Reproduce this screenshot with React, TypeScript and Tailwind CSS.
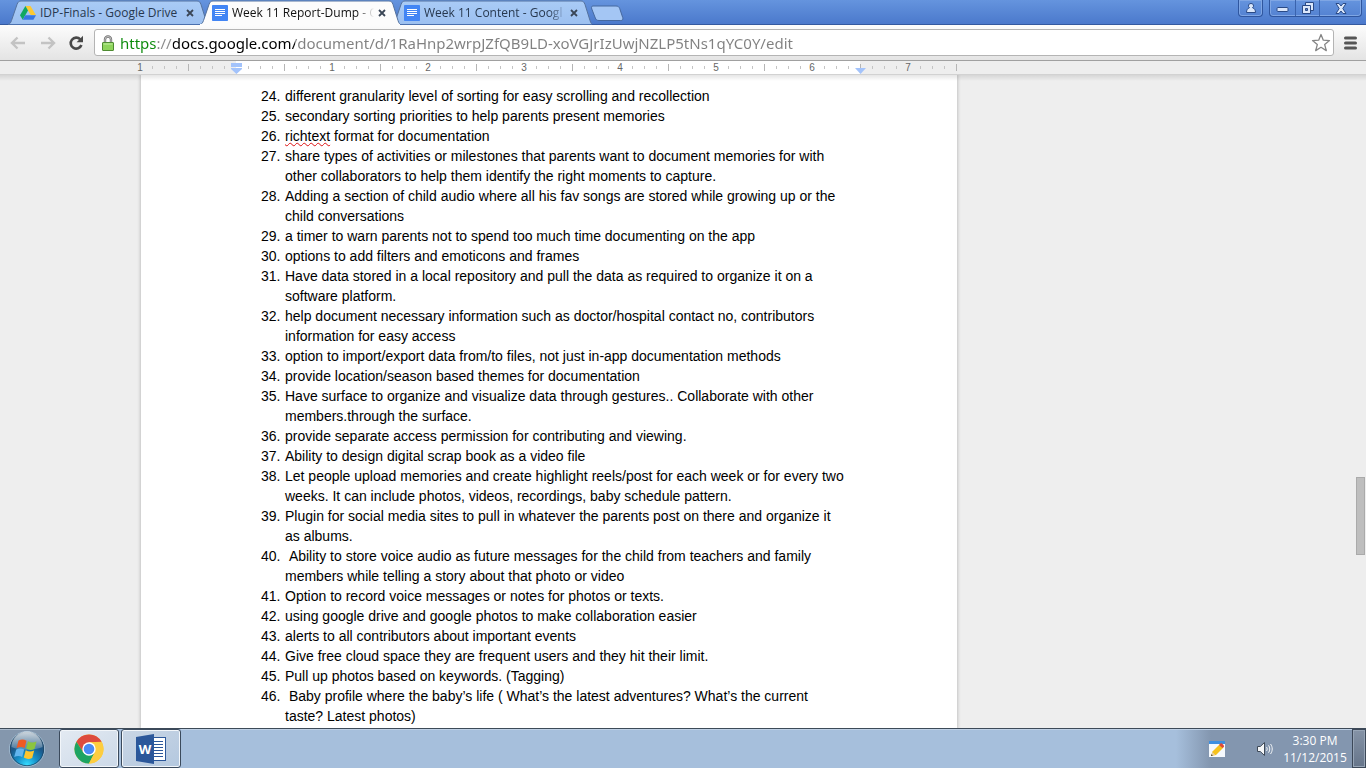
import { useState } from "react";

const items: string[] = [
  "different granularity level of sorting for easy scrolling and recollection",
  "secondary sorting priorities to help parents present memories",
  "richtext format for documentation",
  "share types of activities or milestones that parents want to document memories for with\nother collaborators to help them identify the right moments to capture.",
  "Adding a section of child audio where all his fav songs are stored while growing up or the\nchild conversations",
  "a timer to warn parents not to spend too much time documenting on the app",
  "options to add filters and emoticons and frames",
  "Have data stored in a local repository and pull the data as required to organize it on a\nsoftware platform.",
  "help document necessary information such as doctor/hospital contact no, contributors\ninformation for easy access",
  "option to import/export data from/to files, not just in-app documentation methods",
  "provide location/season based themes for documentation",
  "Have surface to organize and visualize data through gestures.. Collaborate with other\nmembers.through the surface.",
  "provide separate access permission for contributing and viewing.",
  "Ability to design digital scrap book as a video file",
  "Let people upload memories and create highlight reels/post for each week or for every two\nweeks. It can include photos, videos, recordings, baby schedule pattern.",
  "Plugin for social media sites to pull in whatever the parents post on there and organize it\nas albums.",
  "\u00a0Ability to store voice audio as future messages for the child from teachers and family\nmembers while telling a story about that photo or video",
  "Option to record voice messages or notes for photos or texts.",
  "using google drive and google photos to make collaboration easier",
  "alerts to all contributors about important events",
  "Give free cloud space they are frequent users and they hit their limit.",
  "Pull up photos based on keywords. (Tagging)",
  "\u00a0Baby profile where the baby’s life ( What’s the latest adventures? What’s the current\ntaste? Latest photos)",
];

function DriveIcon() {
  return (
    <svg viewBox="0 0 16 16" className="size-4 shrink-0" aria-hidden="true">
      <path d="M5.4 1h5.1l5.4 9h-5.2z" fill="#fcc934" />
      <path d="M5.4 1 0 10.2 2.7 14.7 8 5.5z" fill="#11a861" />
      <path d="M5.3 10.2H16l-2.6 4.5H2.7z" fill="#3777e3" />
    </svg>
  );
}

function DocsIcon() {
  return (
    <svg viewBox="0 0 16 16" className="size-4 shrink-0" aria-hidden="true">
      <rect width="16" height="16" rx="0.8" fill="#4285f4" />
      <path d="M3 4.5h10M3 6.5h10M3 8.5h10M3 10.5h7" stroke="#fff" />
    </svg>
  );
}

type TabProps = { title: string; active?: boolean; drive?: boolean };

function Tab({ title, active, drive }: TabProps) {
  return (
    <div className={`relative -mr-2 h-[25px] w-[200px] shrink-0 ${active ? "z-10" : ""}`}>
      <svg
        viewBox="0 0 200 25"
        preserveAspectRatio="none"
        className="absolute inset-0 size-full"
        aria-hidden="true"
      >
        <defs>
          <linearGradient id="idleTab" x1="0" y1="0" x2="0" y2="1">
            <stop offset="0" stopColor="#a9cbf6" />
            <stop offset="1" stopColor="#9cc0f0" />
          </linearGradient>
        </defs>
        <path
          d="M0 24.5C2 24 2.5 23 3.5 20.5L9 4.5C10 1.8 11 1 13 1H189C191 1 192 1.8 193 4.5L198 20.5C199 23.5 199.500 24 201 24.500"
          fill={active ? "#fcfcfc" : "url(#idleTab)"}
          stroke="#54729f"
        />
        <path d={active ? "M0 24.5H200" : "M1 24.5H200"} stroke={active ? "#fcfcfc" : "#4a70ae"} />
      </svg>
      <div className="relative flex h-[25px] items-center px-3">
        {drive ? <DriveIcon /> : <DocsIcon />}
        <a
          href="#document"
          className={`ml-1 min-w-0 flex-1 overflow-hidden whitespace-nowrap text-[12px] leading-4 ${
            active ? "text-[#111]" : "text-[#27384f]"
          } ${drive ? "" : "[mask-image:linear-gradient(to_right,#000_125px,transparent_142px)]"}`}
        >
          {title}
        </a>
        <button type="button" aria-label="Close tab" className="flex size-3 shrink-0 items-center justify-center">
          <svg viewBox="0 0 8 8" className="size-2">
            <path d="M1 1l6 6M7 1 1 7" stroke="#3a4656" strokeWidth="1.8" />
          </svg>
        </button>
      </div>
    </div>
  );
}

function WindowControls() {
  const stroke = "#2a4a86";
  return (
    <div className="ml-auto flex h-[17px] pr-1">
      <button
        type="button"
        aria-label="Profile"
        className="mr-1.5 flex w-[25px] items-center justify-center rounded-b border border-t-0 border-[#2f569f] shadow-[inset_0_0_0_1px_#7fa6e4]"
      >
        <svg viewBox="0 0 12 12" className="size-3">
          <path
            d="M6 1.500a2.300 2.300 0 0 1 1.500 4.200C9.500 6.500 10.500 8 10.500 10.500h-9C1.500 8 2.500 6.500 4.500 5.700A2.300 2.300 0 0 1 6 1.500z"
            fill="#dbe7fa"
            stroke={stroke}
          />
        </svg>
      </button>
      <div className="flex overflow-hidden rounded-b border border-t-0 border-[#2f569f] shadow-[inset_0_0_0_1px_#7fa6e4]">
        <button type="button" aria-label="Minimize" className="flex w-[25px] items-center justify-center pt-1">
          <svg viewBox="0 0 13 6" className="h-1.5 w-[13px]">
            <rect x="1" y="0.500" width="11" height="4" rx="1" fill="#dbe7fa" stroke={stroke} />
          </svg>
        </button>
        <button type="button" aria-label="Restore" className="flex w-[25px] items-center justify-center border-x border-[#3a63ad]">
          <svg viewBox="0 0 14 14" className="size-3.5">
            <path d="M4.500 1.500h8v8h-8z" fill="#dbe7fa" stroke={stroke} />
            <path d="M1.500 4.500h8v8h-8z" fill="#dbe7fa" stroke={stroke} />
            <path d="M4.500 7.500h2v2h-2z" fill="#5b86d4" stroke={stroke} />
          </svg>
        </button>
        <button type="button" aria-label="Close window" className="flex w-[41px] items-center justify-center">
          <svg viewBox="0 0 12 11" className="h-[11px] w-3">
            <path
              d="M1 .5h3L6 3l2-2.500h3L7.800 5.500 11 10.500H8L6 8l-2 2.500H1l3.200-5z"
              fill="#dbe7fa"
              stroke={stroke}
            />
          </svg>
        </button>
      </div>
    </div>
  );
}

function Toolbar() {
  const [url, setUrl] = useState(
    "https://docs.google.com/document/d/1RaHnp2wrpJZfQB9LD-xoVGJrIzUwjNZLP5tNs1qYC0Y/edit",
  );
  return (
    <nav className="flex h-9 shrink-0 items-center border-b border-[#a0a0a0] bg-linear-to-b from-[#fcfcfc] to-[#e4e4e4] pl-2.5">
      <button type="button" aria-label="Back" className="mr-3.5">
        <svg viewBox="0 0 16 14" className="h-3.5 w-4">
          <path d="M7.500 1.500 2 7l5.500 5.500M2 7h13" fill="none" stroke="#c3c3c3" strokeWidth="2.400" />
        </svg>
      </button>
      <button type="button" aria-label="Forward" className="mr-3">
        <svg viewBox="0 0 16 14" className="h-3.5 w-4">
          <path d="M8.500 1.500 14 7l-5.500 5.500M14 7H1" fill="none" stroke="#c3c3c3" strokeWidth="2.400" />
        </svg>
      </button>
      <button type="button" aria-label="Reload" className="mr-2.5">
        <svg viewBox="0 0 16 16" className="size-4">
          <path d="M12.300 4.400A5.500 5.500 0 1 0 13.400 10" fill="none" stroke="#494949" strokeWidth="2.600" />
          <path d="M15 .8v6.400H8.600z" fill="#494949" />
        </svg>
      </button>
      <div className="flex h-[27px] min-w-0 flex-1 items-center rounded-[3px] border border-[#b4b4b4] bg-white pl-1.5 pr-0.5">
        <svg viewBox="0 0 14 16" className="mr-[5px] h-4 w-3.5 shrink-0" aria-hidden="true">
          <path d="M4 8V4.500a3 3 0 0 1 6 0V8" fill="none" stroke="#747474" strokeWidth="2.400" />
          <path d="M4 8V4.500a3 3 0 0 1 6 0V8" fill="none" stroke="#d5d5d5" strokeWidth="0.800" />
          <rect x="1.500" y="7.500" width="11" height="8" rx="0.500" fill="#8ed45c" stroke="#4e8b32" />
          <path d="M2.500 9h9" stroke="#c4efa4" />
        </svg>
        <input
          aria-label="Address"
          value={url}
          onChange={(e) => setUrl(e.target.value)}
          className="h-6 min-w-0 flex-1 bg-[linear-gradient(to_right,#0a8a0a_37px,#8a8a8a_37px,#8a8a8a_53px,#000_53px,#000_175px,#808080_175px)] bg-clip-text font-['Noto_Sans','Open_Sans',sans-serif] text-[15px] text-transparent caret-black outline-none"
        />
        <button type="button" aria-label="Bookmark this page">
          <svg viewBox="0 0 20 19" className="h-[19px] w-5">
            <path
              d="m10 1.500 2.300 5.700 6.200.4-4.800 4 1.600 6L10 14.300l-5.300 3.300 1.600-6-4.800-4 6.200-.4z"
              fill="#fff"
              stroke="#858585"
              strokeWidth="1.300"
              strokeLinejoin="round"
            />
          </svg>
        </button>
      </div>
      <button type="button" aria-label="Menu" className="ml-2.5 mr-[9px]">
        <svg viewBox="0 0 13 14" className="h-3.5 w-[13px]">
          <path d="M1.500 2h10M1.500 7h10M1.500 12h10" stroke="#555" strokeWidth="3" strokeLinecap="round" />
        </svg>
      </button>
    </nav>
  );
}

function Ruler() {
  const ticks = Array.from({ length: 69 }, (_, i) => i).filter((i) => i % 8 !== 0);
  const labels = [1, 0, 1, 2, 3, 4, 5, 6, 7];
  return (
    <div className="h-3.5 shrink-0 border-b border-[#d2d2d2] bg-[#eee] pl-[134px]">
      <svg viewBox="0 0 830 14" className="block h-3.5 w-[830px]" role="img" aria-label="Ruler">
        <rect x="102" width="624" height="13" fill="#fff" />
        {ticks.map((i) => (
          <path
            key={i}
            d={i % 4 === 0 ? `M${6.5 + i * 12} 3v7` : `M${6.5 + i * 12} 5v3`}
            stroke={i % 4 === 0 ? "#b5b5b5" : "#c4c4c4"}
          />
        ))}
        {labels.map((n, i) =>
          n ? (
            <text
              key={i}
              x={6 + i * 96}
              y="10"
              textAnchor="middle"
              fill="#666"
              className="font-['Liberation_Sans',Arial,sans-serif] text-[10px]"
            >
              {n}
            </text>
          ) : null,
        )}
        <path d="M97 2h11v4H97zM97 7h11v1l-5.500 5-5.500-5z" fill="#a3c3fb" />
        <path d="M721 7h11l-5.500 6z" fill="#a3c3fb" />
      </svg>
    </div>
  );
}

function DocumentArea() {
  return (
    <main className="relative min-h-0 flex-1 overflow-hidden bg-[#eee] pl-[141px]" id="document">
      <article className="min-h-full w-[816px] bg-white pl-[120px] pt-[11px] shadow-[0_0_3px_1px_rgba(0,0,0,0.18)]">
        <ol start={24} className="font-['Liberation_Sans',Arial,sans-serif] text-[14px] leading-5 text-black">
          {items.map((text, i) => (
            <li key={i} className="flex">
              <span className="w-6 shrink-0">{i + 24}.</span>
              <span className="whitespace-pre">
                {text.startsWith("richtext") ? (
                  <>
                    <span className="underline decoration-[#d11] decoration-wavy decoration-1 underline-offset-1">
                      richtext
                    </span>
                    {text.slice(8)}
                  </>
                ) : (
                  text
                )}
              </span>
            </li>
          ))}
        </ol>
      </article>
      <div className="absolute inset-x-0 top-0 h-1.5 bg-linear-to-b from-black/10 to-transparent" />
      <div className="absolute right-px top-[402px] h-[78px] w-[9px] border border-[#aaa] bg-[#bebebe]" />
    </main>
  );
}

function StartOrb() {
  return (
    <svg viewBox="0 0 38 38" className="size-[38px]" aria-hidden="true">
      <defs>
        <radialGradient id="orb" cx="0.5" cy="0.95" r="0.85">
          <stop offset="0" stopColor="#35dcff" />
          <stop offset="0.35" stopColor="#168fc8" />
          <stop offset="0.7" stopColor="#1c5788" />
          <stop offset="1" stopColor="#345d80" />
        </radialGradient>
        <linearGradient id="gloss" x1="0" y1="0" x2="0" y2="1">
          <stop offset="0" stopColor="#fff" stopOpacity="0.75" />
          <stop offset="1" stopColor="#fff" stopOpacity="0.2" />
        </linearGradient>
      </defs>
      <circle cx="19" cy="19" r="17.500" fill="url(#orb)" stroke="#a9c3d8" />
      <circle cx="19" cy="19" r="16.700" fill="none" stroke="#1d415f" strokeWidth="0.800" />
      <path d="M3.500 17a15.500 15.500 0 0 1 31 0c-8 3.500-23 3.500-31 0z" fill="url(#gloss)" />
      <path d="M10.500 10.500c3-1.500 5.500-1.300 8 .2L16.600 18c-2.600-1.500-5-1.500-8 0z" fill="#ee5a24" />
      <path d="M20 11.300c3 1.600 5.400 1.600 8.500.2L26.500 19c-3 1.300-5.600 1.200-8.400-.4z" fill="#8bc53f" />
      <path d="M8.200 19.500c3-1.500 5.500-1.400 8 .1l-2 7.400c-2.600-1.500-5-1.500-8 0z" fill="#63b5ee" />
      <path d="M17.700 20.300c3 1.600 5.400 1.600 8.500.2l-2 7.500c-3 1.300-5.600 1.200-8.400-.4z" fill="#fec52e" />
    </svg>
  );
}

function ChromeIcon() {
  return (
    <svg viewBox="0 0 30 30" className="size-[30px]" aria-hidden="true">
      <circle cx="15" cy="15" r="14.500" fill="#fbc934" />
      <path d="M2.440 7.750A14.500 14.500 0 0 1 27.560 7.750L15 8.300 9.200 18.350z" fill="#dd4b3e" />
      <path d="M2.440 7.750A14.500 14.500 0 0 0 15 29.500L20.800 18.350H9.200z" fill="#1da462" />
      <path d="M15 8.300h12.930A14.500 14.500 0 0 1 15 29.500L20.800 18.350z" fill="#fdcd40" />
      <circle cx="15" cy="15" r="6.700" fill="#fff" />
      <circle cx="15" cy="15" r="5.300" fill="#4a8af4" />
    </svg>
  );
}

function WordIcon() {
  return (
    <svg viewBox="0 0 30 30" className="size-[30px]" aria-hidden="true">
      <rect x="16" y="3.500" width="13.500" height="23" fill="#fff" stroke="#2b579a" />
      <path d="M18 7.500h9M18 10.500h9M18 13.500h9M18 16.500h9M18 19.500h9M18 22.500h9" stroke="#2b579a" />
      <path d="M0 3 18 0v30L0 27z" fill="#2b579a" />
      <text x="9" y="20" textAnchor="middle" fill="#fff" className="font-['Open_Sans',sans-serif] text-[13px] font-bold">
        W
      </text>
    </svg>
  );
}

function Taskbar() {
  const app =
    "flex h-full w-[60px] items-center justify-center rounded-[3px] border border-[#3b4a5c] shadow-[inset_0_0_0_1px_#f2f6fa]";
  return (
    <footer className="flex h-10 shrink-0 border-t border-[#3d4a58] bg-[#a6bfdc]">
      <button
        type="button"
        aria-label="Start"
        className="flex w-[59px] items-center bg-[#8497ad] pl-2 shadow-[inset_0_1px_0_#a9b9cb]"
      >
        <StartOrb />
      </button>
      <button type="button" aria-label="Google Chrome" className={`${app} mr-0.5 bg-linear-to-br from-[#e3eaf2] to-[#ccd9e8]`}>
        <ChromeIcon />
      </button>
      <button type="button" aria-label="Word" className={`${app} bg-linear-to-br from-[#c9d6e5] to-[#b4c8df]`}>
        <WordIcon />
      </button>
      <div className="flex flex-1 items-center justify-end bg-[linear-gradient(to_left,#8396af_155px,#a6bfdc_190px)] shadow-[inset_0_1px_0_#bfd1e6]">
        <button type="button" aria-label="Input panel" className="mr-8">
          <svg viewBox="0 0 16 16" className="size-4">
            <rect width="16" height="16" fill="#f5f9fd" />
            <path d="M0 0h16v3H0z" fill="#3d8fe0" />
            <path d="M2 15l1.500-4.500L11 3l3.500 3.500L7 14z" fill="#f6c21c" />
            <path d="m10 4 1.500-1.500c1-.8 4 2 3.500 3.200L13.500 7z" fill="#e04a3a" />
            <path d="M2 15l1.300-4 2.900 2.800z" fill="#e9cfa0" />
            <path d="m2 15 .6-1.800 1.200 1.200z" fill="#222" />
          </svg>
        </button>
        <button type="button" aria-label="Volume" className="mr-2.5">
          <svg viewBox="0 0 16 16" className="size-4">
            <path d="M.5 5.500h2.800L7.500 1.500v13l-4.200-4H.5z" fill="#f4f6f8" stroke="#3f4a58" />
            <path d="M9.500 6c.9 1.200.9 2.800 0 4M11.500 4.300c1.700 2.200 1.700 5.200 0 7.400M13.500 3c2.300 3 2.300 7 0 10" fill="none" stroke="#f4f6f8" />
          </svg>
        </button>
        <time className="w-16 text-center text-[12px] leading-[17px] text-white">
          3:30 PM
          <br />
          11/12/2015
        </time>
        <button
          type="button"
          aria-label="Show desktop"
          className="ml-[5px] h-full w-3.5 border border-[#3c4858] bg-linear-to-b from-[#8593a6] to-[#66758a] shadow-[inset_0_0_0_1px_#97a5b6]"
        />
      </div>
    </footer>
  );
}

export default function App() {
  return (
    <div className="flex h-screen flex-col overflow-hidden bg-[#eee] font-['Open_Sans','Noto_Sans',sans-serif]">
      <header className="flex h-[25px] shrink-0 bg-linear-to-b from-[#6594de] to-[#4a78cb] pl-2 shadow-[inset_0_-1px_0_#34599f]">
        <Tab title="IDP-Finals - Google Drive" drive />
        <Tab title="Week 11 Report-Dump - G" active />
        <Tab title="Week 11 Content - Googl" />
        <button type="button" aria-label="New tab" className="ml-1.5 self-start pt-[5px]">
          <svg viewBox="0 0 34 17" className="block h-[17px] w-[34px]">
            <path
              d="M3 1h23c2 0 3 .8 3.700 2.500l3 9c.6 2-.2 3-2 3H9c-2 0-3-.8-3.700-2.500l-3.500-9C1.200 2 1.500 1 3 1z"
              fill="#a4c6f4"
              stroke="#45689f"
            />
          </svg>
        </button>
        <WindowControls />
      </header>
      <Toolbar />
      <Ruler />
      <DocumentArea />
      <Taskbar />
    </div>
  );
}
